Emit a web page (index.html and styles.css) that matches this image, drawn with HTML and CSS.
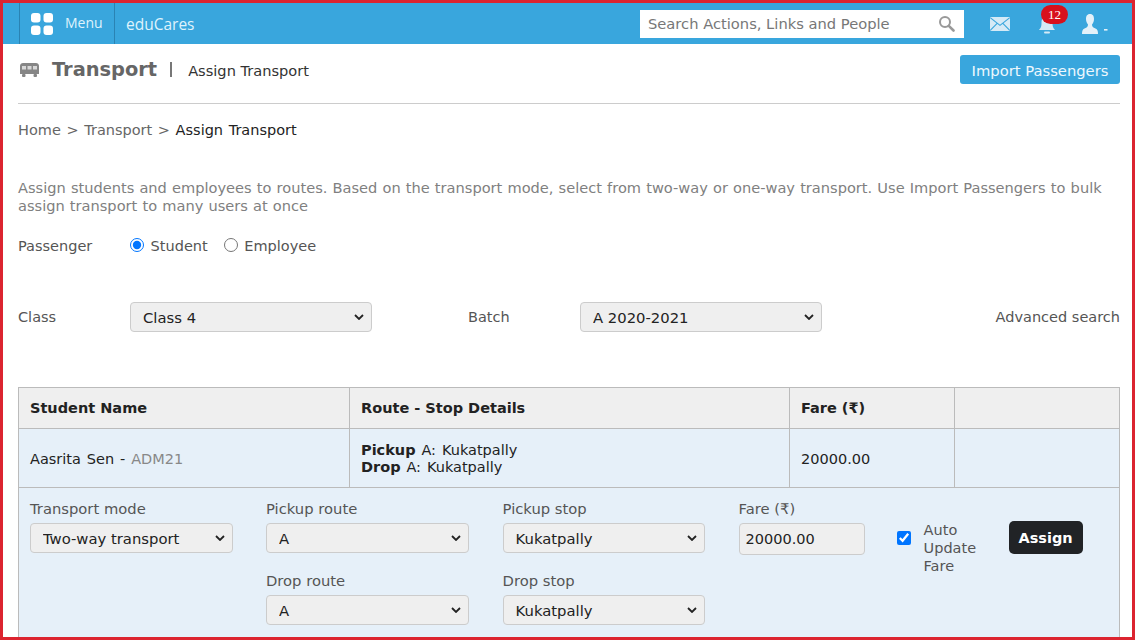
FILE: index.html
```html
<!DOCTYPE html>
<html lang="en">
<head>
    <meta charset="UTF-8">
    <title>Assign Transport - eduCares</title>
    <link rel="stylesheet" href="styles.css">
</head>
<body>
<div class="frame">
    <header class="topbar">
        <div class="menu-btn">
            <svg class="menu-icon" width="22" height="22" viewBox="0 0 22 22" fill="#fff">
                <rect x="0" y="0" width="9.5" height="9.5" rx="3"/>
                <rect x="12.5" y="0" width="9.5" height="9.5" rx="3"/>
                <rect x="0" y="12.5" width="9.5" height="9.5" rx="3"/>
                <rect x="12.5" y="12.5" width="9.5" height="9.5" rx="3"/>
            </svg>
            <span class="menu-label">Menu</span>
        </div>
        <div class="brand">eduCares</div>
        <div class="search">
            <input class="search-input" type="text" placeholder="Search Actions, Links and People">
            <svg width="17" height="17" viewBox="0 0 17 17" fill="none" stroke="#999" stroke-width="2">
                <circle cx="7" cy="7" r="5"/>
                <path d="M10.8 10.8 L15.5 15.5" stroke-width="2.6" stroke-linecap="round"/>
            </svg>
        </div>
        <svg class="icon-mail" width="20" height="14" viewBox="0 0 21 15" preserveAspectRatio="none">
            <rect width="21" height="15" rx="1.5" fill="#d5eaf6"/>
            <path d="M0.5 1 L10.5 9 L20.5 1 M0.5 14 L7.5 6.8 M20.5 14 L13.5 6.8" fill="none" stroke="#39a6dd" stroke-width="1.2"/>
        </svg>
        <div class="bell">
            <svg width="18" height="20" viewBox="0 0 18 20" fill="#d5eaf6">
                <path d="M9 1 C5 1 3.5 4 3.5 8 C3.5 12 2.5 13 1 15 L17 15 C15.5 13 14.5 12 14.5 8 C14.5 4 13 1 9 1 Z"/>
                <rect x="6" y="16.5" width="6" height="2" rx="1"/>
            </svg>
            <span class="badge">12</span>
        </div>
        <svg class="icon-user" width="27" height="22" viewBox="0 0 27 22" fill="#e4f1f9">
            <path d="M9 1 C5.8 1 5 3.5 5 6 C5 8.5 6 10.5 7 11.5 C7 13.5 6 14.5 3.5 15.5 C1.5 16.3 1 18 1 21 L17 21 C17 18 16.5 16.3 14.5 15.5 C12 14.5 11 13.5 11 11.5 C12 10.5 13 8.5 13 6 C13 3.5 12.2 1 9 1 Z"/>
            <rect x="23" y="16" width="3.5" height="1.6"/>
        </svg>
    </header>

    <main class="content">
        <div class="title-row">
            <svg class="bus-icon" width="19" height="14" viewBox="0 0 19 14" fill="#868686">
                <path d="M3 0 H16 C17.5 0 19 1 19 3 V11 H0 V3 C0 1 1.5 0 3 0 Z"/>
                <rect x="2" y="3" width="4" height="3.5" fill="#d8d8d8"/>
                <rect x="7.5" y="3" width="4" height="3.5" fill="#d8d8d8"/>
                <rect x="13" y="3" width="4" height="3.5" fill="#d8d8d8"/>
                <rect x="2" y="11" width="3.5" height="3" rx="1"/>
                <rect x="13.5" y="11" width="3.5" height="3" rx="1"/>
            </svg>
            <h1 class="page-title">Transport</h1>
            <span class="title-sep"></span>
            <span class="page-sub">Assign Transport</span>
            <button class="import-btn" type="button">Import Passengers</button>
        </div>

        <div class="breadcrumb">Home &gt; Transport &gt; <span class="crumb-current">Assign Transport</span></div>

        <p class="intro">Assign students and employees to routes. Based on the transport mode, select from two-way or one-way transport. Use Import Passengers to bulk assign transport to many users at once</p>

        <div class="passenger-row">
            <span class="field-label">Passenger</span>
            <label class="radio"><input type="radio" name="passenger" checked> Student</label>
            <label class="radio"><input type="radio" name="passenger"> Employee</label>
        </div>

        <div class="filter-row">
            <span class="field-label">Class</span>
            <select class="select filter-select"><option>Class 4</option></select>
            <span class="field-label batch-label">Batch</span>
            <select class="select filter-select"><option>A 2020-2021</option></select>
            <span class="advanced">Advanced search</span>
        </div>

        <table class="assign-table">
            <thead>
                <tr>
                    <th class="col-name">Student Name</th>
                    <th class="col-route">Route - Stop Details</th>
                    <th class="col-fare">Fare (₹)</th>
                    <th></th>
                </tr>
            </thead>
            <tbody>
                <tr class="student-row">
                    <td>Aasrita Sen - <span class="adm">ADM21</span></td>
                    <td class="route-cell"><strong>Pickup</strong> A: Kukatpally<br><strong>Drop</strong> A: Kukatpally</td>
                    <td>20000.00</td>
                    <td></td>
                </tr>
                <tr class="edit-row">
                    <td colspan="4">
                        <div class="edit-grid">
                            <div class="edit-field">
                                <label>Transport mode</label>
                                <select class="select"><option>Two-way transport</option></select>
                            </div>
                            <div class="edit-field">
                                <label>Pickup route</label>
                                <select class="select"><option>A</option></select>
                            </div>
                            <div class="edit-field">
                                <label>Pickup stop</label>
                                <select class="select"><option>Kukatpally</option></select>
                            </div>
                            <div class="edit-field">
                                <label>Fare (₹)</label>
                                <input class="fare-input" type="text" value="20000.00">
                            </div>
                            <label class="auto-update">
                                <input type="checkbox" checked>
                                <span>Auto Update Fare</span>
                            </label>
                            <button class="assign-btn" type="button">Assign</button>
                            <div class="edit-field drop-route">
                                <label>Drop route</label>
                                <select class="select"><option>A</option></select>
                            </div>
                            <div class="edit-field drop-stop">
                                <label>Drop stop</label>
                                <select class="select"><option>Kukatpally</option></select>
                            </div>
                        </div>
                    </td>
                </tr>
            </tbody>
        </table>
    </main>
</div>
</body>
</html>
```

FILE: styles.css
```css
html, body {
    margin: 0;
    padding: 0;
    background: #fff;
}
body {
    font-family: "DejaVu Sans", Verdana, sans-serif;
    font-size: 14px;
    color: #555;
}
.frame {
    box-sizing: border-box;
    height: 640px;
    border: 3px solid #dc2430;
    overflow: hidden;
}

/* top bar */
.topbar {
    display: flex;
    align-items: center;
    height: 41px;
    padding-left: 16px;
    background: #39a6dd;
}
.menu-btn {
    display: flex;
    align-items: center;
    box-sizing: border-box;
    width: 96px;
    height: 41px;
    padding-left: 11px;
    border-left: 1px solid #2a83b3;
    border-right: 1px solid #2a83b3;
}
.menu-label {
    margin-left: 12px;
    margin-top: -3px;
    font-family: "Open Sans", sans-serif;
    font-size: 14px;
    color: #dff3fc;
}
.brand {
    margin-left: 11px;
    font-family: "Open Sans", sans-serif;
    font-size: 15.5px;
    color: #dff3fc;
}
.search {
    display: flex;
    align-items: center;
    box-sizing: border-box;
    width: 324px;
    height: 28px;
    margin-left: auto;
    margin-top: 0;
    padding: 0 9px 0 8px;
    background: #fff;
}
.search-input {
    flex: 1;
    min-width: 0;
    padding: 0;
    border: 0;
    outline: 0;
    font-family: inherit;
    font-size: 14.7px;
    color: #777;
}
.search-input::placeholder {
    color: #777;
    opacity: 1;
}
.icon-mail {
    margin-left: 26px;
}
.bell {
    position: relative;
    width: 18px;
    height: 20px;
    margin-left: 28px;
    margin-top: 2px;
}
.badge {
    position: absolute;
    top: -10px;
    left: 3px;
    width: 27px;
    height: 19px;
    border-radius: 10px;
    background: #d8101c;
    color: #fff;
    font-family: "Liberation Serif", serif;
    font-size: 13px;
    line-height: 19px;
    text-align: center;
}
.icon-user {
    margin-left: 25px;
    margin-right: 24px;
}

/* page */
.content {
    padding: 0 12px 0 15px;
}
.title-row {
    display: flex;
    align-items: center;
    height: 59px;
    border-bottom: 1px solid #ccc;
    padding-bottom: 0;
}
.bus-icon {
    margin: -8px 0 0 2px;
}
.page-title {
    margin: -9px 0 0 13px;
    font-size: 19.4px;
    font-weight: bold;
    color: #666;
}
.title-sep {
    width: 2px;
    height: 15px;
    margin: -8px 0 0 13px;
    background: #777;
}
.page-sub {
    margin: -7px 0 0 16px;
    font-size: 14.6px;
    color: #333;
}
.import-btn {
    width: 160px;
    height: 29px;
    margin: -8px 0 0 auto;
    padding: 1px 0 0;
    border: 0;
    border-radius: 3px;
    background: #39a6dd;
    color: #eef8fd;
    font-family: inherit;
    font-size: 14.75px;
}
.breadcrumb {
    margin-top: 17px;
    font-size: 14.5px;
    line-height: 18px;
    word-spacing: 1px;
    color: #666;
}
.crumb-current {
    color: #222;
}
.intro {
    margin: 40px 0 0;
    font-size: 14.6px;
    line-height: 18px;
    word-spacing: 0.5px;
    color: #808080;
}
.passenger-row {
    display: flex;
    align-items: center;
    margin-top: 22px;
    height: 18px;
}
.field-label {
    width: 112px;
    font-size: 14.5px;
    color: #555;
}
.radio {
    margin-right: 16px;
    font-size: 14.5px;
    color: #555;
}
.radio input {
    width: 14px;
    height: 14px;
    margin: 0 2px 0 0;
    vertical-align: -1px;
}
.filter-row {
    display: flex;
    align-items: center;
    margin-top: 47px;
    height: 30px;
}
.select {
    display: block;
    box-sizing: border-box;
    width: 202.5px;
    height: 30px;
    padding: 1px 20px 0 12px;
    border: 1px solid #ccc;
    border-radius: 4px;
    appearance: none;
    background-color: #efefef;
    background-image: url("data:image/svg+xml,%3Csvg xmlns='http://www.w3.org/2000/svg' width='10' height='6' viewBox='0 0 10 6'%3E%3Cpath d='M1 1 L5 5 L9 1' fill='none' stroke='%23222' stroke-width='1.8'/%3E%3C/svg%3E");
    background-repeat: no-repeat;
    background-position: right 7px center;
    color: #222;
    font-family: inherit;
    font-size: 14.8px;
}
.filter-select {
    width: 242px;
}
.batch-label {
    width: 112px;
    margin-left: 96px;
}
.advanced {
    margin-left: auto;
    font-size: 14.5px;
    color: #555;
}

/* table */
.assign-table {
    width: 1102px;
    margin-top: 55px;
    border-collapse: collapse;
    table-layout: fixed;
    font-size: 14.5px;
}
.assign-table th, .assign-table td {
    padding: 0 11px;
    border: 1px solid #bbb;
    text-align: left;
    color: #222;
}
.assign-table th {
    height: 40px;
    background: #efefef;
    font-weight: bold;
}
.col-name { width: 308px; }
.col-route { width: 417px; }
.col-fare { width: 142px; }
.student-row td {
    height: 57px;
    padding-top: 1px;
    background: #e6f0f9;
    word-spacing: 1.3px;
}
.route-cell {
    line-height: 17px;
}
.adm {
    color: #888;
}
.edit-row td {
    height: 160px;
    padding: 0;
    background: #e6f0f9;
    vertical-align: top;
}
.edit-grid {
    display: grid;
    grid-template-columns: 203px 203.6px 203px 126px 78px 74px;
    column-gap: 33px;
    grid-template-rows: 72px 72px;
    padding: 12px 0 0 11px;
}
.edit-field label {
    display: block;
    margin-bottom: 5px;
    font-size: 14.75px;
    line-height: 18px;
    color: #555;
}
.fare-input {
    box-sizing: border-box;
    width: 126px;
    height: 32px;
    padding: 0 6px;
    border: 1px solid #ccc;
    border-radius: 4px;
    background: #efefef;
    color: #222;
    font-family: inherit;
    font-size: 14.5px;
}
.auto-update {
    display: flex;
    align-items: flex-start;
    margin-top: 21px;
    margin-left: -1px;
    width: 95px;
    height: 54px;
    line-height: 18px;
    color: #555;
}
.auto-update input {
    flex: none;
    width: 14px;
    height: 14px;
    margin: 10px 13px 0 0;
}
.assign-btn {
    width: 74px;
    height: 33px;
    margin-top: 21px;
    border: 0;
    border-radius: 5px;
    background: #212326;
    color: #fff;
    font-family: inherit;
    font-size: 14.5px;
    font-weight: bold;
}
.drop-route {
    grid-column: 2;
    grid-row: 2;
}
.drop-stop {
    grid-column: 3;
    grid-row: 2;
}
```
